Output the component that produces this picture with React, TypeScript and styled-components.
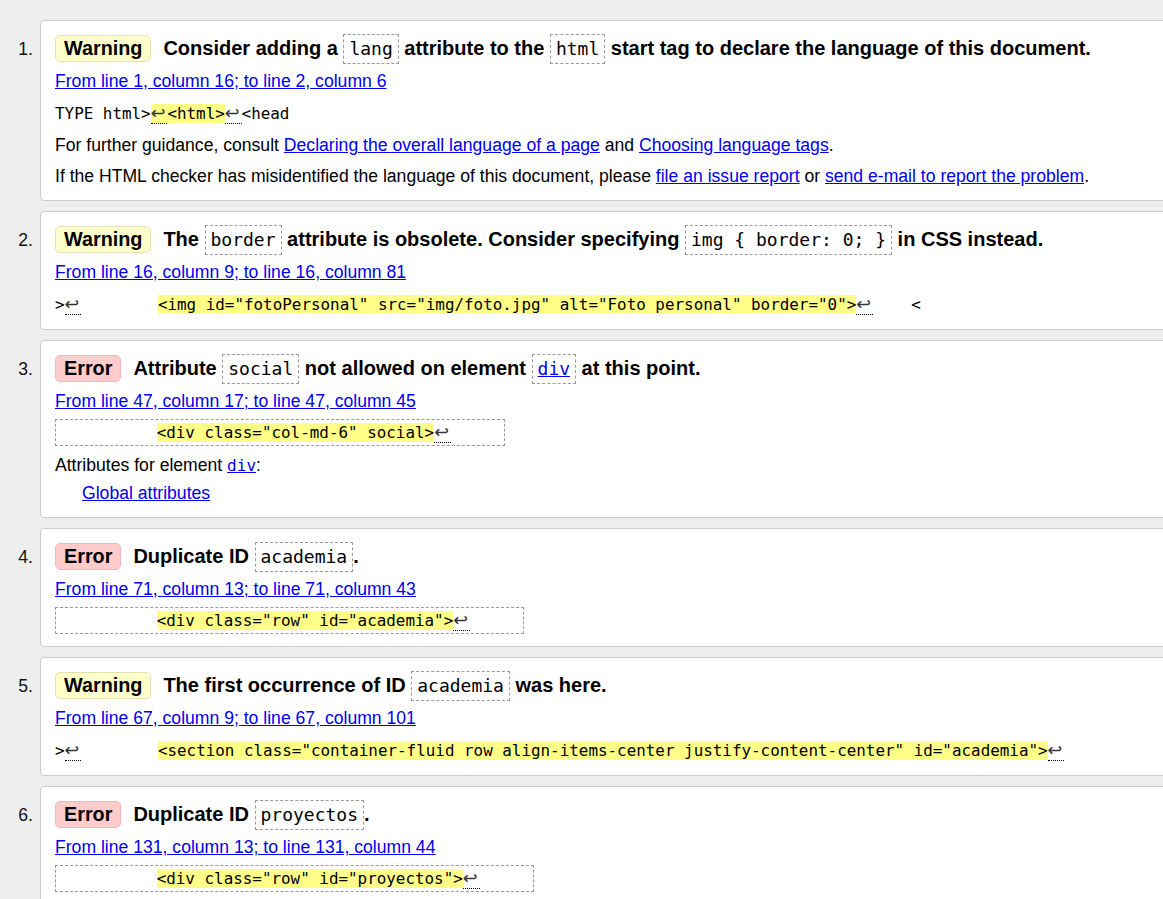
import type { ReactNode } from "react";
import { createGlobalStyle, styled } from "styled-components";

const GlobalStyle = createGlobalStyle`
    html, body {
        margin: 0;
        padding: 0;
        background: #eee;
        overflow: hidden;
    }
    body {
        font-family: "Liberation Sans", Arial, sans-serif;
        font-size: 17.6px;
        color: #000;
    }
`;

const List = styled.ol`
    list-style: none;
    margin: 0;
    padding: 20px 0 0 0;
    width: 1220px;
    display: flex;
    flex-direction: column;
    gap: 10px;
`;

const Item = styled.li`
    display: flex;
    align-items: flex-start;
`;

const Num = styled.span`
    flex: none;
    width: 33px;
    padding: 14px 7px 0 0;
    text-align: right;
    line-height: 30px;
    color: #111;
`;

const Card = styled.div`
    flex: 1;
    background: #fff;
    border: 1px solid #ccc;
    border-radius: 4px;
    padding: 12px 14px 12px 14px;
`;

const Title = styled.p`
    margin: 0;
    height: 30px;
    font-weight: bold;
    font-size: 20px;
    line-height: 30px;
    white-space: nowrap;
`;

const Badge = styled.span<{ $kind: "error" | "warning" }>`
    display: inline-block;
    font-size: 19.8px;
    line-height: 25px;
    padding: 0 8px;
    margin-right: 12px;
    border-radius: 5px;
    background: ${(p) => (p.$kind === "error" ? "#fcc" : "#ffc")};
    border: 1px solid ${(p) => (p.$kind === "error" ? "#f0b8b8" : "#e4e0b0")};
`;

const Code = styled.code`
    display: inline-block;
    font-family: "DejaVu Sans Mono", "Liberation Mono", monospace;
    font-weight: normal;
    font-size: 18px;
    line-height: 28px;
    padding: 0 5px;
    border: 1px dashed #999;

    a {
        color: #00e;
    }
`;

const Location = styled.p`
    margin: 6px 0 0;
    line-height: 24px;

    a {
        color: #00e;
    }
`;

const Extract = styled.p<{ $boxed?: boolean }>`
    margin: ${(p) => (p.$boxed ? "6px 0 0" : "8px 0 0")};
    font-family: "DejaVu Sans Mono", "Liberation Mono", monospace;
    font-size: 15.9px;
    line-height: 25px;
    white-space: pre;
    width: ${(p) => (p.$boxed ? "fit-content" : "auto")};
    padding: ${(p) => (p.$boxed ? "0 53px 0 5px" : "0")};
    border: ${(p) => (p.$boxed ? "1px dashed #999" : "none")};
`;

const Hl = styled.b`
    font-weight: normal;
    background: #ff8;
`;

const Arrow = styled.span`
    font-family: "DejaVu Sans", sans-serif;
    font-size: 17.6px;
    padding-right: 2px;
    color: #333;
    border-bottom: 1px dotted #000;
`;

const Para = styled.p<{ $indent?: boolean }>`
    margin: ${(p) => (p.$indent ? "3px 0 0 27px" : "7px 0 0")};
    line-height: 24px;

    a {
        color: #00e;
    }
`;

const Mono = styled.code`
    font-family: "DejaVu Sans Mono", "Liberation Mono", monospace;
    font-size: 16px;
`;

const Lf = () => <Arrow>↩</Arrow>;

type Message = {
    kind: "error" | "warning";
    title: ReactNode;
    location: string;
    extract: ReactNode;
    boxed?: boolean;
    extra?: ReactNode;
};

const messages: Message[] = [
    {
        kind: "warning",
        title: (
            <>
                Consider adding a <Code>lang</Code> attribute to the <Code>html</Code> start tag to declare the language of this document.
            </>
        ),
        location: "From line 1, column 16; to line 2, column 6",
        extract: (
            <>
                {"TYPE html>"}
                <Hl><Lf />{"<html>"}</Hl>
                <Lf />
                {"<head"}
            </>
        ),
        extra: (
            <>
                <Para>
                    For further guidance, consult <a href="#">Declaring the overall language of a page</a> and{" "}
                    <a href="#">Choosing language tags</a>.
                </Para>
                <Para>
                    If the HTML checker has misidentified the language of this document, please{" "}
                    <a href="#">file an issue report</a> or <a href="#">send e-mail to report the problem</a>.
                </Para>
            </>
        ),
    },
    {
        kind: "warning",
        title: (
            <>
                The <Code>border</Code> attribute is obsolete. Consider specifying <Code>{"img { border: 0; }"}</Code> in CSS instead.
            </>
        ),
        location: "From line 16, column 9; to line 16, column 81",
        extract: (
            <>
                {">"}
                <Lf />
                {"        "}
                <Hl>{'<img id="fotoPersonal" src="img/foto.jpg" alt="Foto personal" border="0">'}</Hl>
                <Lf />
                {"    <"}
            </>
        ),
    },
    {
        kind: "error",
        title: (
            <>
                Attribute <Code>social</Code> not allowed on element <Code><a href="#">div</a></Code> at this point.
            </>
        ),
        location: "From line 47, column 17; to line 47, column 45",
        boxed: true,
        extract: (
            <>
                {"          "}
                <Hl>{'<div class="col-md-6" social>'}</Hl>
                <Lf />
            </>
        ),
        extra: (
            <>
                <Para>
                    Attributes for element <a href="#"><Mono>div</Mono></a>:
                </Para>
                <Para $indent>
                    <a href="#">Global attributes</a>
                </Para>
            </>
        ),
    },
    {
        kind: "error",
        title: (
            <>
                Duplicate ID <Code>academia</Code>.
            </>
        ),
        location: "From line 71, column 13; to line 71, column 43",
        boxed: true,
        extract: (
            <>
                {"          "}
                <Hl>{'<div class="row" id="academia">'}</Hl>
                <Lf />
            </>
        ),
    },
    {
        kind: "warning",
        title: (
            <>
                The first occurrence of ID <Code>academia</Code> was here.
            </>
        ),
        location: "From line 67, column 9; to line 67, column 101",
        extract: (
            <>
                {">"}
                <Lf />
                {"        "}
                <Hl>{'<section class="container-fluid row align-items-center justify-content-center" id="academia">'}</Hl>
                <Lf />
            </>
        ),
    },
    {
        kind: "error",
        title: (
            <>
                Duplicate ID <Code>proyectos</Code>.
            </>
        ),
        location: "From line 131, column 13; to line 131, column 44",
        boxed: true,
        extract: (
            <>
                {"          "}
                <Hl>{'<div class="row" id="proyectos">'}</Hl>
                <Lf />
            </>
        ),
    },
];

export default function App() {
    return (
        <>
            <GlobalStyle />
            <List>
                {messages.map((m, i) => (
                    <Item key={i}>
                        <Num>{i + 1}.</Num>
                        <Card>
                            <Title>
                                <Badge $kind={m.kind}>{m.kind === "error" ? "Error" : "Warning"}</Badge>
                                {m.title}
                            </Title>
                            <Location>
                                <a href="#">{m.location}</a>
                            </Location>
                            <Extract $boxed={m.boxed}>{m.extract}</Extract>
                            {m.extra}
                        </Card>
                    </Item>
                ))}
            </List>
        </>
    );
}
